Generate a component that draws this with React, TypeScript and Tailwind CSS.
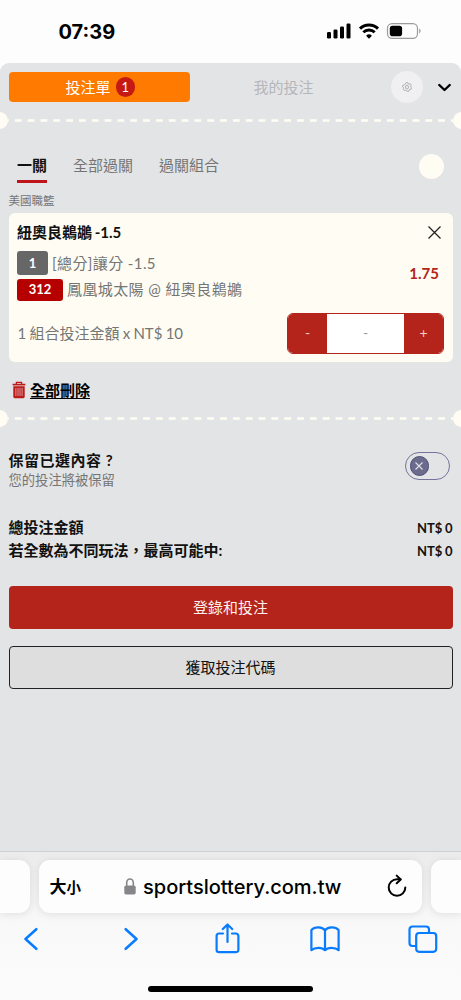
import React, { useState } from 'react';

const tabs = ['一關', '全部過關', '過關組合'];

const totals = [
  { label: '總投注金額', value: 'NT$ 0' },
  { label: '若全數為不同玩法，最高可能中:', value: 'NT$ 0' },
];

function StatusIcons() {
  return (
    <svg width="96" height="20" viewBox="0 0 96 20" fill="none">
      <rect x="1" y="11" width="4" height="6.5" rx="1.3" fill="#000" />
      <rect x="7.5" y="8.5" width="4" height="9" rx="1.3" fill="#000" />
      <rect x="14" y="5.5" width="4" height="12" rx="1.3" fill="#000" />
      <rect x="20.5" y="2.5" width="4" height="15" rx="1.3" fill="#000" />
      <path d="M34 7.6a13 13 0 0 1 18 0" stroke="#000" strokeWidth="3.1" />
      <path d="M37.3 11.3a8.2 8.2 0 0 1 11.4 0" stroke="#000" strokeWidth="2.9" />
      <path d="M43 17.7l-2.9-3a4.2 4.2 0 0 1 5.8 0z" fill="#000" />
      <rect x="61.5" y="2.7" width="30" height="14.6" rx="4.6" stroke="#9b9b9b" strokeWidth="1.2" />
      <rect x="63.8" y="4.8" width="12.3" height="10.4" rx="2.8" fill="#000" />
      <path d="M93.3 7.6c1.6.7 1.6 4.1 0 4.8z" fill="#8c8c8c" />
    </svg>
  );
}

function TicketDivider() {
  return (
    <div className="flex h-[17px] w-full shrink-0 items-center overflow-hidden">
      <div className="-ml-[9px] h-[17px] w-[17px] shrink-0 rounded-full bg-[#fffdf3]" />
      <svg className="h-[3px] flex-1" preserveAspectRatio="none">
        <line x1="-6" y1="1.5" x2="460" y2="1.5" stroke="#fffdf3" strokeWidth="2.4" strokeDasharray="6.8 6.03" />
      </svg>
      <div className="-mr-[9px] h-[17px] w-[17px] shrink-0 rounded-full bg-[#fffdf3]" />
    </div>
  );
}

function TrashIcon() {
  return (
    <svg width="14" height="18" viewBox="0 0 14 18" fill="none">
      <path d="M4.4 3V1.3h5.2V3" stroke="#bd1a1a" strokeWidth="1.3" />
      <path d="M0.6 3.6h12.8" stroke="#bd1a1a" strokeWidth="1.7" />
      <path d="M1.3 5.2h11.4v10.6a1.4 1.4 0 0 1-1.4 1.4H2.7a1.4 1.4 0 0 1-1.4-1.4z" fill="#bd1a1a" />
      <path d="M3.9 7v8M6 7v8M8 7v8M10.1 7v8" stroke="#e3b9bb" strokeWidth="0.8" />
    </svg>
  );
}

function GearIcon() {
  return (
    <svg width="10" height="10" viewBox="0 0 20 20" fill="none" stroke="#a5a5a8" strokeWidth="1.7">
      <path d="M8 1.5h4l.7 2.3 1.6.7 2.2-1.1 2 2.8-1.3 2 .2 1.8 2 1.5-1.4 3.2-2.4-.1-1.3 1.2-.3 2.5-3.9.4-1.3-2-1.8-.5-2.2 1-2.4-2.5 1-2.2-.5-1.7-2-1.3 1.1-3.4 2.5 0 1.2-1.2z" />
      <ellipse cx="10" cy="10.2" rx="3" ry="3.8" />
    </svg>
  );
}

function BetCard() {
  return (
    <div className="h-[149px] rounded-md bg-[#fffdf3] pl-[8.5px] pr-[8.5px]">
      <div className="flex h-[38px] items-center justify-between pr-[3px]">
        <h3 className="text-[15px] font-bold text-[#111] [word-spacing:-1px]">紐奧良鵜鶘 -1.5</h3>
        <svg width="13" height="13" viewBox="0 0 13 13" stroke="#222" strokeWidth="1.3">
          <path d="M0.5 0.5l12 12M12.5 0.5l-12 12" />
        </svg>
      </div>
      <div className="flex items-center justify-between">
        <div className="flex flex-col gap-1 text-[#757575]">
          <div className="flex h-6 items-center gap-1">
            <span className="flex h-6 w-[31px] items-center justify-center rounded-[3px] bg-[#676767] text-[13px] font-bold text-white">1</span>
            <span className="text-[15px] tracking-[0.4px]">[總分]讓分 -1.5</span>
          </div>
          <div className="flex h-[21.5px] items-center gap-1">
            <span className="flex h-[21.5px] w-[46px] items-center justify-center rounded-[3px] bg-[#b60000] text-[13px] font-bold text-white">312</span>
            <span className="text-[15px] tracking-[0.4px]">鳳凰城太陽 @ 紐奧良鵜鶘</span>
          </div>
        </div>
        <span className="pb-[5px] pr-[5px] text-[15px] font-bold text-[#b4241a]">1.75</span>
      </div>
      <div className="mt-[12px] flex h-[41px] items-center justify-between">
        <span className="pl-[0.5px] text-[15px] text-[#757575] [word-spacing:-0.6px]">1 組合投注金額 x NT$ 10</span>
        <div className="flex h-[41px] w-[157px] overflow-hidden rounded-[6px] border border-[#b4241a] bg-white text-[14px]">
          <button className="w-[39px] bg-[#b4241a] text-[#f0d0cd]">-</button>
          <span className="flex flex-1 items-center justify-center text-[#999]">-</span>
          <button className="w-[39px] bg-[#b4241a] text-[#f0d0cd]">+</button>
        </div>
      </div>
    </div>
  );
}

function BrowserBar() {
  return (
    <div className="flex h-[149px] shrink-0 flex-col border-t border-[#d0d0d1] bg-[linear-gradient(#ececed,#f9f9f9_75px,#fcfbfb)]">
      <div className="mt-2 flex h-[53px] gap-[9px]">
        <div className="w-[30px] shrink-0 rounded-r-[11px] bg-[#fdfdfd] shadow-[0_1px_8px_rgba(0,0,0,0.1)]" />
        <div className="flex flex-1 items-center rounded-[11px] bg-[#fdfdfd] pl-[10.5px] pr-[15px] shadow-[0_1px_8px_rgba(0,0,0,0.1)]">
          <span className="flex w-[32px] items-baseline font-bold text-black">
            <span className="text-[17px]">大</span>
            <span className="text-[14.5px]">小</span>
          </span>
          <svg className="ml-[42px]" width="12" height="17" viewBox="0 0 12 17">
            <path d="M2.7 8V4.8a3.3 3.8 0 0 1 6.6 0V8" fill="none" stroke="#86868a" strokeWidth="1.6" />
            <rect x="0.3" y="7.4" width="11.4" height="9.2" rx="1.8" fill="#86868a" />
          </svg>
          <span className="ml-[7.5px] pt-px font-[Inter] text-[20px] font-medium text-black">sportslottery.com.tw</span>
          <svg className="mb-[2px] ml-auto" width="20" height="24" viewBox="0 0 20 24" fill="none" stroke="#000" strokeWidth="2" strokeLinecap="round" strokeLinejoin="round">
            <path d="M18.3 13.5a8.3 8.3 0 1 1-8.300-8.300h3.500" />
            <path d="M9.7 1.600l4 3.800-4 3.800" />
          </svg>
        </div>
        <div className="w-[30px] shrink-0 rounded-l-[11px] bg-[#fdfdfd] shadow-[0_1px_8px_rgba(0,0,0,0.1)]" />
      </div>
      <div className="flex h-[52px] items-center pl-[24px]">
        <svg width="14" height="24" viewBox="0 0 14 24" fill="none" stroke="#087bff" strokeWidth="2.5" strokeLinecap="round" strokeLinejoin="round">
          <path d="M12.3 2.2L1.500 12l10.800 9.800" />
        </svg>
        <svg className="ml-[86px]" width="14" height="24" viewBox="0 0 14 24" fill="none" stroke="#087bff" strokeWidth="2.5" strokeLinecap="round" strokeLinejoin="round">
          <path d="M1.7 2.2L12.5 12 1.7 21.8" />
        </svg>
        <svg className="ml-[76px]" width="27" height="32" viewBox="0 0 26 32" fill="none" stroke="#087bff" strokeWidth="2.2" strokeLinecap="round" strokeLinejoin="round">
          <path d="M8.5 10.5H4.6A2.5 2.5 0 0 0 2.1 13v13.7a2.5 2.5 0 0 0 2.5 2.5h16.8a2.5 2.5 0 0 0 2.5-2.5V13a2.5 2.5 0 0 0-2.5-2.5h-3.9" />
          <path d="M13 19V2M8.3 6L13 1.5 17.7 6" />
        </svg>
        <svg className="ml-[69px]" width="30" height="26" viewBox="0 0 30 26" fill="none" stroke="#087bff" strokeWidth="2.2" strokeLinecap="round" strokeLinejoin="round">
          <path d="M15 4.4C12.5.6 4.5.5 1.4 4v20.2c3.5-3 11-3 13.6 0 2.6-3 10.1-3 13.6 0V4C25.500.5 17.5.6 15 4.4z" />
          <path d="M15 4.4v19.5" />
        </svg>
        <svg className="ml-[68px]" width="30" height="28" viewBox="0 0 30 28" fill="none" stroke="#087bff" strokeWidth="2.2">
          <path d="M8 21H4.5a3 3 0 0 1-3-3V4.5a3 3 0 0 1 3-3H18a3 3 0 0 1 3 3V8" />
          <rect x="8.2" y="8" width="20" height="18.8" rx="3" />
        </svg>
      </div>
      <div className="mx-auto mt-[21px] h-[5.5px] w-[165px] rounded-full bg-black" />
    </div>
  );
}

export default function App() {
  const [activeTab, setActiveTab] = useState(0);

  return (
    <div className="flex h-[1000px] w-[461px] flex-col overflow-hidden bg-[#fdfdfd] font-['Lato','Noto_Sans_CJK_TC',sans-serif] leading-none">
      <div className="flex h-[63px] shrink-0 items-center justify-between pl-[58.5px] pr-[39px]">
        <span className="font-[Inter] text-[20px] font-bold text-black">07:39</span>
        <div className="pb-[2px]"><StatusIcons /></div>
      </div>

      <div className="flex h-[788px] shrink-0 flex-col rounded-t-[9px] bg-[#e3e4e6]">
        <div className="mb-px flex h-12 items-center pl-[8.5px] pr-[10px]">
          <button className="flex h-[30px] w-[181.5px] items-center justify-center gap-[5px] rounded-[4px] bg-[#ff7a00] pl-[2px] text-[15px] text-white">
            <span>投注單</span>
            <span className="flex h-[19.5px] w-[19.5px] items-center justify-center rounded-full bg-[#c51a13] text-[13px]">1</span>
          </button>
          <span className="w-[187px] text-center text-[15px] text-[#b5b6b8]">我的投注</span>
          <div className="ml-[14px] flex h-8 w-8 items-center justify-center rounded-full bg-[#f0f0f2]">
            <GearIcon />
          </div>
          <svg className="ml-auto mt-px" width="13" height="9" viewBox="0 0 13 9" fill="none" stroke="#000" strokeWidth="2.4" strokeLinecap="round" strokeLinejoin="round">
            <path d="M1.3 2l5.2 5L11.7 2" />
          </svg>
        </div>

        <TicketDivider />

        <div className="flex h-[54px] items-end justify-between pl-[17px] pr-[17.5px]">
          <div className="flex gap-[26px] text-[15px]">
            {tabs.map((tab, i) => (
              <button
                key={tab}
                onClick={() => setActiveTab(i)}
                className={`h-[35px] border-b-[3px] pt-[2px] ${
                  activeTab === i ? 'border-[#c0141b] font-bold text-[#111]' : 'border-transparent text-[#757575]'
                }`}
              >
                {tab}
              </button>
            ))}
          </div>
          <div className="mb-[4px] h-[25px] w-[25px] rounded-full bg-[#fffdf3]" />
        </div>

        <div className="px-[8.5px]">
          <div className="flex h-[30px] items-center pb-px pt-[6px] text-[11.5px] text-[#757575]">美國職籃</div>
          <BetCard />
        </div>

        <div className="flex h-[48px] items-center gap-1 pl-[12px] pt-[8px]">
          <TrashIcon />
          <button className="text-[15px] font-bold text-black underline underline-offset-2">全部刪除</button>
        </div>

        <TicketDivider />

        <div className="mt-[23px] flex h-[40px] items-center justify-between pl-[8.5px] pr-[11px]">
          <div className="flex flex-col">
            <span className="flex h-[20px] items-center text-[15px] font-bold tracking-[0.5px] text-[#111]">保留已選內容 ?</span>
            <span className="flex h-[20px] items-center pt-px text-[13.3px] text-[#757575]">您的投注將被保留</span>
          </div>
          <div className="mb-[8px] flex h-[28px] w-[45px] items-center rounded-full border-[1.5px] border-[#73739b] pl-[3.5px]">
            <div className="flex h-[19.5px] w-[19.5px] items-center justify-center rounded-full border border-[#4d4d75] bg-[#6b6b8d]">
              <svg width="8" height="8" viewBox="0 0 8 8" stroke="#e3e4e6" strokeWidth="1.1">
                <path d="M0.5 0.5l7 7M7.5 0.5l-7 7" />
              </svg>
            </div>
          </div>
        </div>

        <div className="mt-[26px] px-[8.5px]">
          {totals.map((row) => (
            <div key={row.label} className="flex h-[23px] items-center justify-between font-bold text-[#111]">
              <span className="text-[15px]">{row.label}</span>
              <span className="pt-[2px] text-[13px] [word-spacing:-0.5px]">{row.value}</span>
            </div>
          ))}
        </div>

        <div className="mt-[24px] flex flex-col gap-[17px] px-[8.5px] text-[15px]">
          <button className="h-[43px] rounded-[4px] bg-[#b4241a] text-[#fbf0ef]">登錄和投注</button>
          <button className="h-[43px] rounded-[4px] border border-[#222] bg-[#dedede] text-[#111]">獲取投注代碼</button>
        </div>
      </div>

      <BrowserBar />
    </div>
  );
}
